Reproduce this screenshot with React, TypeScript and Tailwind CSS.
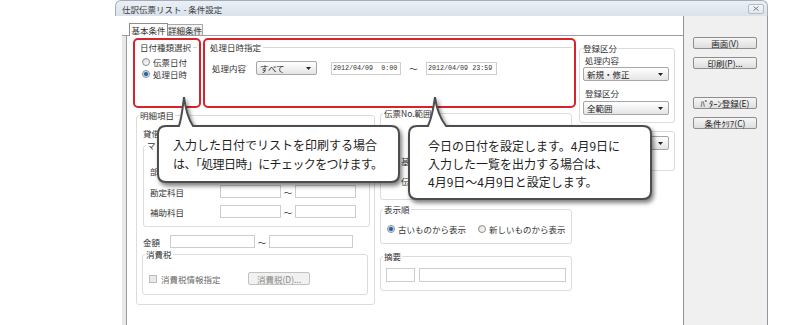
import type { ReactNode } from 'react'
import clsx from 'clsx'

function Caret() {
  return (
    <svg width="5" height="3" viewBox="0 0 5 3" className="shrink-0">
      <path d="M0 0h5L2.5 3z" fill="#222" />
    </svg>
  )
}

function Radio({ on }: { on?: boolean }) {
  return (
    <span className="inline-flex h-[8px] w-[8px] shrink-0 items-center justify-center rounded-full border border-[#8c8c8c] bg-gradient-to-br from-[#dcdcdc] to-white">
      {on && <span className="h-[4px] w-[4px] rounded-full bg-[#2d5c92] ring-1 ring-[#a9cbe8]" />}
    </span>
  )
}

function Select({ value, className }: { value?: string; className?: string }) {
  return (
    <div
      className={clsx(
        'flex h-[14px] items-center justify-between rounded-[2px] border border-[#a6a6a6] bg-gradient-to-b from-white to-[#e4e4e4] pl-[3px] pr-[5px]',
        className,
      )}
    >
      <span className="text-[#222]">{value}</span>
      <Caret />
    </div>
  )
}

function Field({ className, children }: { className?: string; children?: ReactNode }) {
  return (
    <div className={clsx('flex h-[13px] items-center border border-[#cdcdcd] bg-white', className)}>
      {children}
    </div>
  )
}

// fieldset + legend; padding lives on the inner div so the legend stays put
function Group({
  legend,
  className,
  bodyClass,
  children,
}: {
  legend?: string
  className?: string
  bodyClass?: string
  children?: ReactNode
}) {
  return (
    <fieldset className={clsx('rounded-[3px] border border-[#dcdcdc]', className)}>
      <legend className="ml-[2px] px-[1px] leading-[10px]">{legend}</legend>
      <div className={bodyClass}>{children}</div>
    </fieldset>
  )
}

function Button({ label, className }: { label: string; className?: string }) {
  return (
    <div
      className={clsx(
        'flex h-[12px] w-[64px] items-center justify-center rounded-[2px] border border-[#8e8e8e] bg-gradient-to-b from-[#f6f6f6] to-[#dedede] text-[#222]',
        className,
      )}
    >
      {label}
    </div>
  )
}

function RangeRow({ label, className, tilde = true }: { label: string; className?: string; tilde?: boolean }) {
  return (
    <div className={clsx('flex h-[13px] items-center', className)}>
      <span className="w-[70px]">{label}</span>
      <Field className="w-[61px]" />
      <span className="w-[14px] text-center">{tilde ? '～' : ''}</span>
      <Field className="w-[61px]" />
    </div>
  )
}

export default function App() {
  return (
    <div className="relative h-[325px] w-[800px] overflow-hidden bg-white font-['Noto_Sans_CJK_JP','Noto_Sans',sans-serif] text-[8.5px] leading-[10px] text-[#333]">
      <div className="ml-[115px] flex h-full w-[653px] flex-col">
        {/* title bar */}
        <div className="flex h-[16px] shrink-0 items-center justify-between rounded-t-[6px] border border-b-0 border-[#a4adb8] bg-gradient-to-b from-[#eaf0f6] to-[#dae2ec] pl-[6px] pr-[3px]">
          <span className="text-[#3c3c3c]">仕訳伝票リスト - 条件設定</span>
          <span className="flex h-[10px] w-[16px] items-center justify-center rounded-[2px] border border-[#b4bbc4] bg-gradient-to-b from-[#f5f7fa] to-[#e2e6eb]">
            <svg width="6" height="5" viewBox="0 0 6 5">
              <path d="M0.5 0.5l5 4M5.5 0.5l-5 4" stroke="#7a838e" strokeWidth="1" />
            </svg>
          </span>
        </div>

        <div className="flex flex-1">
          {/* main area */}
          <div className="flex w-[568px] flex-col bg-white">
            <div className="flex h-[19px] items-end pl-[14px]">
              <div className="relative z-10 -mb-px flex h-[13px] w-[39px] shrink-0 items-center justify-center border border-b-0 border-[#8d8d8d] bg-white">
                基本条件
              </div>
              <div className="flex h-[11px] w-[35px] shrink-0 items-center justify-center border border-b-0 border-l-0 border-[#a8a8a8] bg-gradient-to-b from-[#f6f6f6] to-[#e3e3e3]">
                詳細条件
              </div>
            </div>

            <div className="ml-[7px] flex flex-1 border-t border-[#9e9e9e]">
              <div className="w-[5px] border-r border-[#9a9a9a] bg-[#e8e8e8]" />
              <div className="flex flex-1 pl-[6px] pt-[2px]">
                {/* left column */}
                <div className="w-[443px]">
                  <div className="flex h-[70px] gap-[2px]">
                    <div className="w-[68px] rounded-[5px] border-2 border-[#d7232b] pl-[5px] pr-[2px] pt-[2px]">
                      <div className="flex items-center">
                        <span>日付種類選択</span>
                        <span className="ml-[2px] h-px flex-1 bg-[#d8d8d8]" />
                      </div>
                      <div className="mt-[4px] flex h-[12px] items-center pl-[2px]">
                        <Radio />
                        <span className="ml-[3px]">伝票日付</span>
                      </div>
                      <div className="flex h-[12px] items-center pl-[2px]">
                        <Radio on />
                        <span className="ml-[3px]">処理日時</span>
                      </div>
                    </div>

                    <div className="w-[373px] rounded-[5px] border-2 border-[#d7232b] pl-[5px] pr-[2px] pt-[2px]">
                      <div className="flex items-center">
                        <span>処理日時指定</span>
                        <span className="ml-[2px] h-px flex-1 bg-[#d8d8d8]" />
                      </div>
                      <div className="mt-[9px] flex h-[14px] items-center pl-[2px]">
                        <span className="w-[44px]">処理内容</span>
                        <Select value="すべて" className="w-[61px]" />
                        <Field className="ml-[14px] w-[70px] pl-[1px] font-['Liberation_Mono',monospace] text-[6.7px] whitespace-pre">
                          2012/04/09  0:00
                        </Field>
                        <span className="w-[25px] text-center">～</span>
                        <Field className="w-[71px] pl-[1px] font-['Liberation_Mono',monospace] text-[6.7px] whitespace-pre">
                          2012/04/09 23:59
                        </Field>
                      </div>
                    </div>
                  </div>

                  <div className="mt-[2px] flex">
                    <Group legend="明細項目" className="ml-[3px] h-[195px] w-[239px]" bodyClass="pl-[6px]">
                      <div className="mt-[8px] h-[10px]">貸借</div>
                      <Group legend="マ" className="mt-[2px] h-[87px] w-[227px]" bodyClass="pl-[6px]">
                        <RangeRow label="部" className="mt-[14px]" tilde={false} />
                        <RangeRow label="勘定科目" className="mt-[8px]" />
                        <RangeRow label="補助科目" className="mt-[7px]" />
                      </Group>
                      <div className="mt-[8px] flex h-[13px] items-center">
                        <span className="w-[27px]">金額</span>
                        <Field className="w-[85px]" />
                        <span className="w-[14px] text-center">～</span>
                        <Field className="w-[84px]" />
                      </div>
                      <Group legend="消費税" className="-ml-px mt-px h-[46px] w-[226px]" bodyClass="pl-[6px]">
                        <div className="mt-[13px] flex h-[13px] items-center">
                          <span className="h-[8px] w-[8px] border border-[#bdbdbd] bg-[#e9e9e9]" />
                          <span className="ml-[4px] w-[87px] text-[#6a6a6a]">消費税情報指定</span>
                          <div className="flex h-[13px] w-[62px] items-center justify-center rounded-[2px] border border-[#c2c2c2] bg-[#f1f1f1] text-[#8a8a8a]">
                            消費税(D)...
                          </div>
                        </div>
                      </Group>
                    </Group>

                    <div className="ml-[5px] w-[192px]">
                      <Group legend="伝票No.範囲" className="-mt-[2px] h-[92px]" bodyClass="pl-[20px]">
                        <div className="mt-[38px] h-[10px]">基</div>
                        <div className="mt-[10px] h-[10px]">伝</div>
                      </Group>
                      <Group legend="表示順" className="mt-[4px] h-[40px]" bodyClass="pl-[6px]">
                        <div className="mt-[10px] flex h-[10px] items-center">
                          <Radio on />
                          <span className="ml-[3px] w-[80px]">古いものから表示</span>
                          <Radio />
                          <span className="ml-[3px]">新しいものから表示</span>
                        </div>
                      </Group>
                      <Group legend="摘要" className="mt-[7px] h-[40px]" bodyClass="flex pl-[5px] pt-[7px]">
                        <Field className="h-[14px] w-[29px]" />
                        <Field className="ml-[4px] h-[14px] w-[147px]" />
                      </Group>
                    </div>
                  </div>
                </div>

                {/* right column */}
                <div className="ml-[3px] w-[96px]">
                  <Group legend="登録区分" className="mt-[5px] h-[80px]" bodyClass="pl-[3px]">
                    <div className="ml-[2px] mt-[2px] h-[10px]">処理内容</div>
                    <Select value="新規・修正" className="mt-[2px] w-[86px]" />
                    <div className="ml-[2px] mt-[7px] h-[10px]">登録区分</div>
                    <Select value="全範囲" className="mt-[3px] w-[86px]" />
                  </Group>
                  <Group className="mt-[8px] h-[40px]" bodyClass="pl-[3px]">
                    <Select className="mt-[4px] w-[86px]" />
                  </Group>
                </div>
              </div>
            </div>
          </div>

          {/* button panel */}
          <div className="flex w-[85px] flex-col border-x border-[#8f96a0] bg-[#f0f0f0] pl-[9px] pt-[21px]">
            <Button label="画面(V)" />
            <Button label="印刷(P)..." className="mt-[8px]" />
            <Button label="ﾊﾟﾀｰﾝ登録(E)" className="mt-[28px]" />
            <Button label="条件ｸﾘｱ(C)" className="mt-[8px]" />
          </div>
        </div>
      </div>

      {/* callout 1 */}
      <div className="absolute left-[157px] top-[95px] z-20 h-[89px] w-[244px] pl-[16px] pt-[40px] text-[12px] leading-[19px] text-[#1e1e1e]">
        <svg
          className="absolute inset-0 [filter:drop-shadow(2px_3px_2px_rgba(0,0,0,0.5))]"
          width="244"
          height="89"
          viewBox="0 0 244 89"
        >
          <path
            d="M9 31H22C25 22 26 10 27 2C28 10 30 22 36 31H234Q242 31 242 39V79Q242 87 234 87H9Q1 87 1 79V39Q1 31 9 31Z"
            fill="#fff"
            stroke="#4d4d4d"
            strokeWidth="2"
          />
        </svg>
        <div className="relative whitespace-nowrap">入力した日付でリストを印刷する場合</div>
        <div className="relative whitespace-nowrap tracking-[-0.6px]">は、「処理日時」にチェックをつけます。</div>
      </div>

      {/* callout 2 */}
      <div className="absolute left-[408px] top-[96px] z-20 h-[105px] w-[245px] pl-[20px] pt-[41px] text-[12px] leading-[18px] text-[#1e1e1e]">
        <svg
          className="absolute inset-0 [filter:drop-shadow(2px_3px_2px_rgba(0,0,0,0.5))]"
          width="245"
          height="105"
          viewBox="0 0 245 105"
        >
          <path
            d="M9 30H20C24 21 26 9 27 1C28 9 31 21 38 30H235Q243 30 243 38V95Q243 103 235 103H9Q1 103 1 95V38Q1 30 9 30Z"
            fill="#fff"
            stroke="#4d4d4d"
            strokeWidth="2"
          />
        </svg>
        <div className="relative whitespace-nowrap">今日の日付を設定します。4月9日に</div>
        <div className="relative whitespace-nowrap">入力した一覧を出力する場合は、</div>
        <div className="relative whitespace-nowrap">4月9日～4月9日と設定します。</div>
      </div>
    </div>
  )
}
